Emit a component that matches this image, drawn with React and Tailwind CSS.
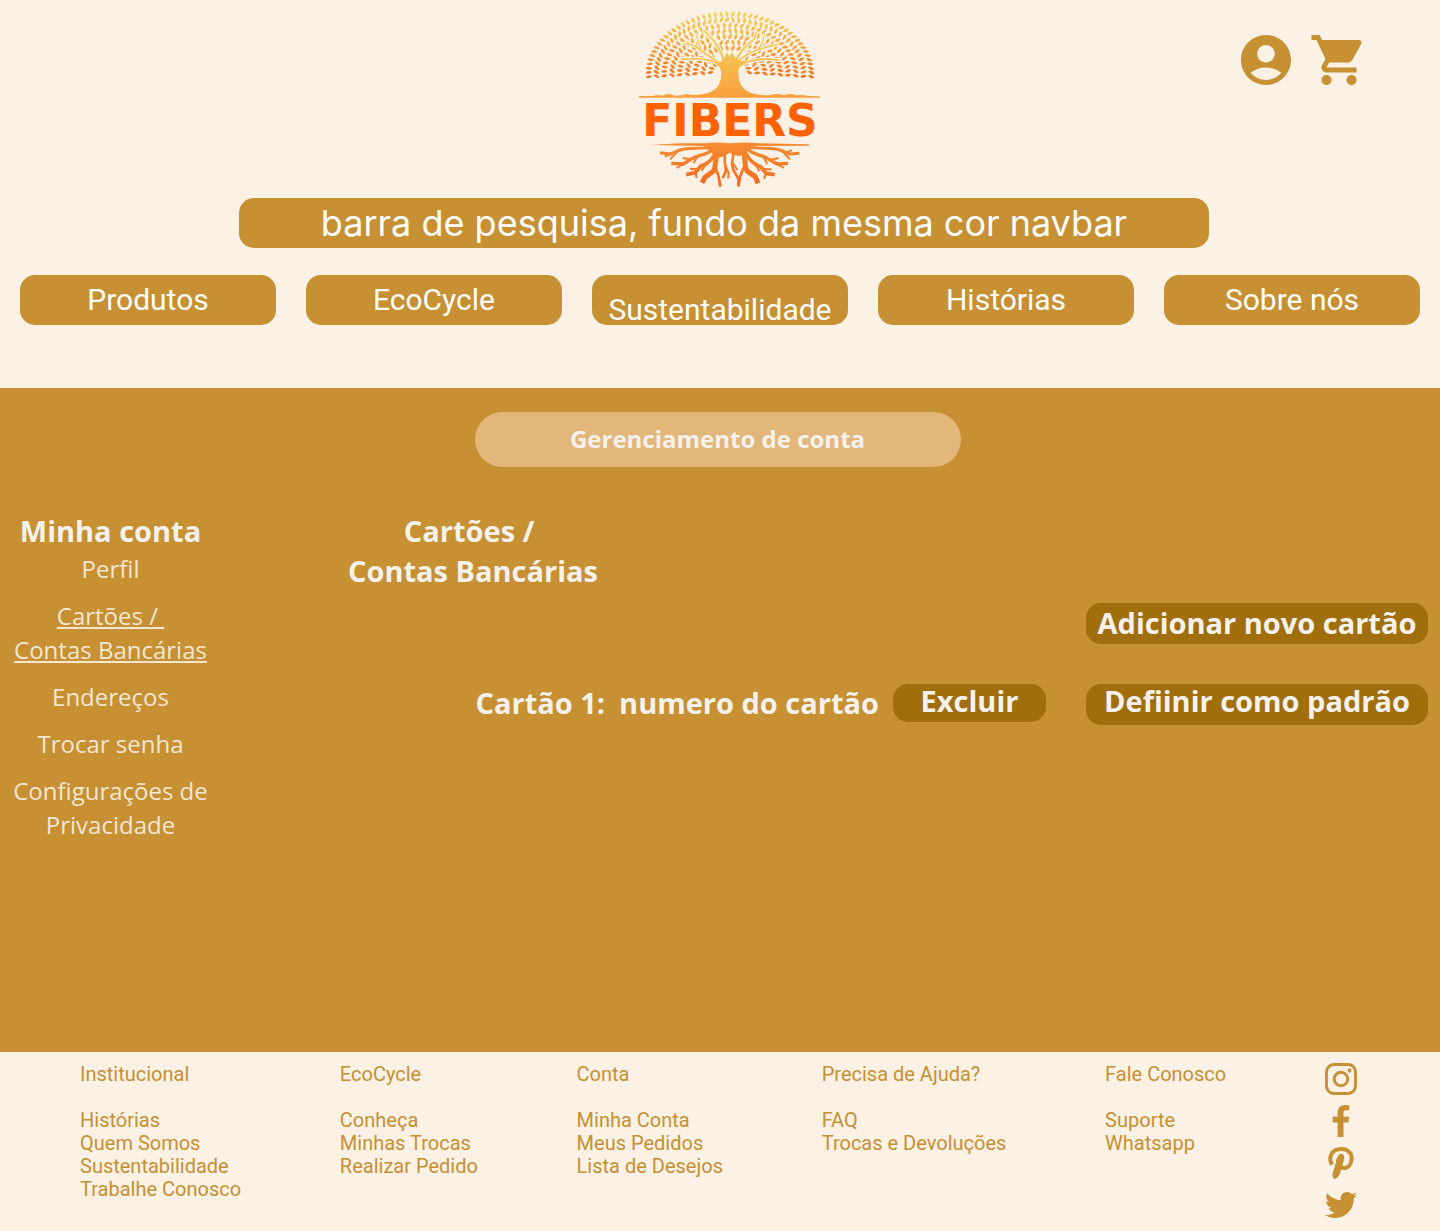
import React from "react";
import { MdAccountCircle, MdShoppingCart } from "react-icons/md";
import { BsInstagram } from "react-icons/bs";
import { FaTwitter } from "react-icons/fa";

const BRANCHES = [
  ["M285 215 C285 170 262 125 222 92", 6],
  ["M280 200 C262 182 232 168 196 138 L165 130", 5],
  ["M212 150 C208 130 204 118 198 104", 4],
  ["M285 205 C255 180 220 172 155 178", 5],
  ["M310 205 C318 165 345 140 372 118 C376 110 378 104 378 98", 6],
  ["M320 190 C340 165 380 145 440 134", 5],
  ["M385 147 C398 130 402 118 404 102", 4],
  ["M318 205 C345 182 385 172 445 180", 5],
];

const ROOTS = [
  ["M250 440 C215 450 180 440 150 450 L122 462 L90 458", 9],
  ["M145 452 L120 478 M122 462 L104 470", 6],
  ["M255 445 C225 470 205 462 182 478 L160 492 L124 490", 10],
  ["M182 478 L158 474 M160 492 L140 504 M205 466 L190 490", 6],
  ["M262 450 C245 480 235 492 212 498 L196 518 L168 524", 11],
  ["M205 508 L180 506 M196 518 L200 534 M230 490 L214 512", 6],
  ["M266 445 C252 480 260 500 250 514 L225 532 L216 548", 15],
  ["M256 500 L266 530 L271 560 M250 515 L236 520", 8],
  ["M288 455 C276 480 292 500 286 518 L278 534", 8],
  ["M288 500 L296 520 L294 535", 6],
  ["M312 455 C304 490 304 505 316 520 L326 538 L325 560", 8],
  ["M308 488 L322 510", 6],
  ["M338 445 C350 480 340 498 352 514 L376 530 L384 550", 15],
  ["M342 500 L330 530 L326 556 M352 514 L366 516", 8],
  ["M342 450 C358 480 370 494 392 500 L408 520 L434 524", 11],
  ["M400 508 L424 508 M408 520 L402 536 M374 488 L388 514", 6],
  ["M350 445 C376 470 398 462 420 480 L442 492 L474 490", 10],
  ["M420 480 L446 474 M442 492 L462 504 M398 466 L412 492", 6],
  ["M352 440 C390 450 420 440 450 450 L478 462 L508 460", 9],
  ["M455 452 L480 478 M470 458 L486 450", 6],
];

const LEAVES = [1, 0.905, 0.81, 0.715, 0.62, 0.525, 0.43, 0.335, 0.24].flatMap((r, ring) => {
  const count = Math.round(46 * r);
  return Array.from({ length: count }, (_, i) => {
    const angle = Math.PI * (-0.03 + (1.06 * (i + 0.5)) / count);
    const x = 300 - Math.cos(angle) * 244 * r;
    const y = 220 - Math.sin(angle) * 178 * r;
    const side = x < 300 ? 1 : -1;
    const lean = (ring % 2 ? 26 : -16) * side + (i % 3) * 6;
    return { x, y, turn: (angle * 180) / Math.PI - 90 + lean };
  });
}).filter(({ x, y }) => Math.abs(x - 300) > 36 || y < 150);

function Logo() {
  return (
    <svg viewBox="0 0 600 585" className="h-[195px] w-[200px]" role="img" aria-label="Fibers">
      <defs>
        <linearGradient id="leaf-fill" gradientUnits="userSpaceOnUse" x1="0" y1="30" x2="0" y2="235">
          <stop offset="0" stopColor="#f4d552" />
          <stop offset="0.5" stopColor="#f5a843" />
          <stop offset="1" stopColor="#f67322" />
        </linearGradient>
        <linearGradient id="wood-fill" gradientUnits="userSpaceOnUse" x1="0" y1="90" x2="0" y2="292">
          <stop offset="0" stopColor="#f5d65f" />
          <stop offset="1" stopColor="#f8a03d" />
        </linearGradient>
        <linearGradient id="root-fill" gradientUnits="userSpaceOnUse" x1="0" y1="428" x2="0" y2="562">
          <stop offset="0" stopColor="#f78d32" />
          <stop offset="1" stopColor="#f8681d" />
        </linearGradient>
      </defs>
      <g fill="url(#leaf-fill)">
        {LEAVES.map(({ x, y, turn }, i) => {
          const a = (turn * Math.PI) / 180;
          const dx = Math.sin(a);
          const dy = -Math.cos(a);
          const p = (u, v) => `${(x + dx * u - dy * v).toFixed(1)} ${(y + dy * u + dx * v).toFixed(1)}`;
          return <path key={i} d={`M${p(-10, 0)} Q${p(-2, -9)} ${p(10, 0)} Q${p(2, 9)} ${p(-10, 0)}Z`} />;
        })}
      </g>
      <g fill="none" stroke="#fbf1e4" strokeLinecap="round">
        {BRANCHES.map(([d, w]) => (
          <path key={d} d={d} strokeWidth={w + 7} />
        ))}
      </g>
      <g fill="none" stroke="url(#wood-fill)" strokeLinecap="round">
        {BRANCHES.map(([d, w]) => (
          <path key={d} d={d} strokeWidth={w} />
        ))}
      </g>
      <path
        fill="url(#wood-fill)"
        d="M235 176 Q262 192 270 186 Q284 182 289 155 L298 170 L306 155 Q318 188 338 182 L356 178 Q324 196 325 218 C326 250 336 272 372 281 Q400 287 422 285 Q445 278 462 286 Q482 278 498 286 Q520 283 535 288 L570 289 V293 H27 V288 L68 288 Q82 282 98 287 Q114 277 134 287 Q155 287 170 282 Q190 288 222 282 C258 276 274 254 274 218 Q272 198 252 188Z"
      />
      <text
        x="300"
        y="408"
        textAnchor="middle"
        fill="#ff6200"
        className="font-['DejaVu_Sans',sans-serif] text-[132px] font-bold"
      >
        FIBERS
      </text>
      <path
        fill="url(#root-fill)"
        d="M60 435 L150 430 L225 430 Q255 425 300 430 Q345 425 390 430 L537 433 V437 L380 438 L354 452 Q335 474 312 464 L298 458 L285 468 L262 474 L238 452 L220 438Z"
      />
      <g fill="none" stroke="url(#root-fill)" strokeLinejoin="round">
        {ROOTS.map(([d, w]) => (
          <path key={d} d={d} strokeWidth={w} />
        ))}
      </g>
    </svg>
  );
}

function FacebookIcon() {
  return (
    <svg viewBox="445 0 932 1664" className="h-8 w-[18px]" fill="currentColor" aria-hidden="true">
      <path d="M1343 12v264h-157q-86 0-116 36t-30 108v189h293l-39 296h-254v759h-306v-759h-255v-296h255v-218q0-186 104-288.5t277-102.5q147 0 228 12z" />
    </svg>
  );
}

function PinterestIcon() {
  return (
    <svg viewBox="15 15 96 96" className="size-8" aria-hidden="true">
      <path
        d="M37 68 C24 50 32 21 64 21 C84 21 96 34 95 50 C94 68 84 78 72 78 C64 78 59 75 57 70"
        fill="none"
        stroke="currentColor"
        strokeWidth="12"
      />
      <path
        d="M54 42 C58 32 74 34 73 46 C71 60 65 76 61 91 C58 102 51 110 44 111 C36 108 37 99 39 91 L48 60 C46 54 52 48 54 42Z"
        fill="currentColor"
      />
    </svg>
  );
}

const NAV = ["Produtos", "EcoCycle", "Sustentabilidade", "Histórias", "Sobre nós"];

const ACCOUNT_LINKS = [
  ["Perfil"],
  ["Cartões /\u00a0", "Contas Bancárias"],
  ["Endereços"],
  ["Trocar senha"],
  ["Configurações de", "Privacidade"],
];

const FOOTER = [
  ["Institucional", ["Histórias", "Quem Somos", "Sustentabilidade", "Trabalhe Conosco"]],
  ["EcoCycle", ["Conheça", "Minhas Trocas", "Realizar Pedido"]],
  ["Conta", ["Minha Conta", "Meus Pedidos", "Lista de Desejos"]],
  ["Precisa de Ajuda?", ["FAQ", "Trocas e Devoluções"]],
  ["Fale Conosco", ["Suporte", "Whatsapp"]],
];

const SOCIAL = [
  ["Instagram", <BsInstagram className="size-8" />],
  ["Facebook", <FacebookIcon />],
  ["Pinterest", <PinterestIcon />],
  ["Twitter", <FaTwitter className="size-8" />],
];

export default function App() {
  return (
    <div className="bg-[#fbf1e4] font-['Roboto',sans-serif] text-[#c69033]">
      <header className="px-5 pb-[63px]">
        <div className="grid grid-cols-[1fr_auto_1fr] items-start pl-5">
          <div />
          <a href="#inicio">
            <Logo />
          </a>
          <div className="flex justify-end gap-[13px] pr-[51px] pt-[30px]">
            <button type="button" aria-label="Conta">
              <MdAccountCircle className="size-[60px]" />
            </button>
            <button type="button" aria-label="Carrinho">
              <MdShoppingCart className="size-[60px]" />
            </button>
          </div>
        </div>
        <form className="mt-[3px] pl-2">
          <input
            type="text"
            aria-label="Pesquisar"
            placeholder="barra de pesquisa, fundo da mesma cor navbar"
            className="mx-auto block h-[50px] w-full max-w-[970px] rounded-[15px] bg-[#c69033] text-center font-['Inter',sans-serif] text-4xl text-white placeholder:text-white placeholder:opacity-100"
          />
        </form>
        <nav className="mt-[27px] grid grid-cols-5 gap-[30px] text-3xl text-white">
          {NAV.map((item) => (
            <a
              key={item}
              href="#menu"
              className={`flex h-[50px] justify-center rounded-[15px] bg-[#c69033] ${
                item === "Sustentabilidade" ? "items-end leading-[30px]" : "items-center"
              }`}
            >
              {item}
            </a>
          ))}
        </nav>
      </header>

      <main className="min-h-[664px] bg-[#c69033] pt-6 font-['Open_Sans',sans-serif] text-[#f5f2ee]">
        <div className="flex justify-center pr-[5px]">
          <h1 className="h-[55px] w-[486px] rounded-full bg-[#e3b67a] text-center text-2xl leading-[54px] font-bold">
            Gerenciamento de conta
          </h1>
        </div>
        <div className="mt-11 flex">
          <aside className="w-[221px] shrink-0 text-center">
            <h2 className="text-[29px] leading-10 font-bold">Minha conta</h2>
            <ul className="mt-px flex flex-col gap-[13px] text-2xl leading-[34px] text-[#f3e6d3]">
              {ACCOUNT_LINKS.map((lines, i) => (
                <li key={lines[0]}>
                  <a href="#conta" className={i === 1 ? "underline" : ""}>
                    {lines.map((line) => (
                      <span key={line} className="block">
                        {line}
                      </span>
                    ))}
                  </a>
                </li>
              ))}
            </ul>
          </aside>
          <section className="flex grow flex-col pr-3 text-[29px] leading-10 font-bold">
            <h2 className="ml-[127px] self-start text-center">
              Cartões /&nbsp;
              <br />
              Contas Bancárias
            </h2>
            <button type="button" className="mt-3 h-[41px] w-[342px] self-end rounded-[15px] bg-[#a16e0c] pb-px leading-[38px]">
              Adicionar novo cartão
            </button>
            <div className="mt-10 flex items-start justify-end">
              <p className="flex gap-[14px] leading-[38px]">
                <span>Cartão 1:</span>
                <span>numero do cartão</span>
              </p>
              <button type="button" className="ml-[14px] h-[38px] w-[153px] rounded-[15px] bg-[#a16e0c] pb-1 leading-[34px]">
                Excluir
              </button>
              <button type="button" className="ml-10 h-[41px] w-[342px] rounded-[15px] bg-[#a16e0c] pb-[7px] leading-[34px]">
                Defiinir como padrão
              </button>
            </div>
          </section>
        </div>
      </main>

      <footer className="flex justify-between pt-[11px] pr-[83px] pb-[10px] pl-20 text-xl leading-[23px]">
        {FOOTER.map(([title, links]) => (
          <div key={title}>
            <h3>{title}</h3>
            <ul className="mt-[23px]">
              {links.map((link) => (
                <li key={link}>
                  <a href="#rodape">{link}</a>
                </li>
              ))}
            </ul>
          </div>
        ))}
        <div className="flex flex-col items-center gap-[10px]">
          {SOCIAL.map(([name, icon]) => (
            <a key={name} href="#social" aria-label={name}>
              {icon}
            </a>
          ))}
        </div>
      </footer>
    </div>
  );
}
